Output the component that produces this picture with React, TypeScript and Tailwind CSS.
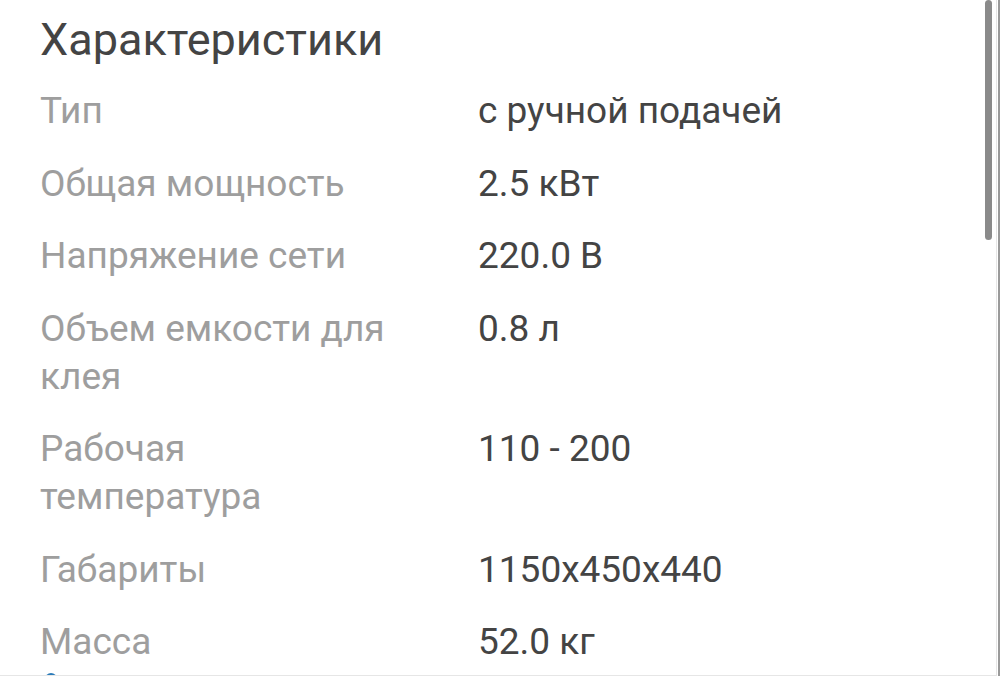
import React from "react";

const SPECS: { label: string; value: string }[] = [
  { label: "Тип", value: "с ручной подачей" },
  { label: "Общая мощность", value: "2.5 кВт" },
  { label: "Напряжение сети", value: "220.0 В" },
  { label: "Объем емкости для клея", value: "0.8 л" },
  { label: "Рабочая температура", value: "110 - 200" },
  { label: "Габариты", value: "1150x450x440" },
  { label: "Масса", value: "52.0 кг" },
];

export default function App() {
  return (
    <div
      className="relative flex h-[676px] w-[1000px] overflow-hidden bg-white"
      style={{ fontFamily: "Roboto, 'Liberation Sans', sans-serif" }}
    >
      <div className="flex-1 overflow-hidden border-b border-[#e6e6e6] pl-[40px] pt-[14px]">
        <h1 className="text-[45px] leading-[52px] text-[#444444]">Характеристики</h1>

        <div className="mt-[21px] flex flex-col gap-[24.5px]">
          {SPECS.map((s) => (
            <div key={s.label} className="flex text-[37px] leading-[48px]">
              <div className="w-[362px] shrink-0 text-[#9e9e9e]">{s.label}</div>
              <div className="ml-[76px] text-[#444444]">{s.value}</div>
            </div>
          ))}
        </div>

        <div className="ml-[5px] mt-[7px] h-[12px] w-[12px] rounded-full bg-[#2b7bb9]" />
      </div>

      {/* right edge */}
      <div className="w-px bg-[#e6e6e6]" />
      <div className="w-px bg-white" />
      <div className="w-[2px] bg-[#9a9a9a]" />

      {/* overlay scrollbar */}
      <div className="absolute right-[8px] top-0 h-[240px] w-[7px] rounded-full bg-[#8a8a8a]" />
    </div>
  );
}
